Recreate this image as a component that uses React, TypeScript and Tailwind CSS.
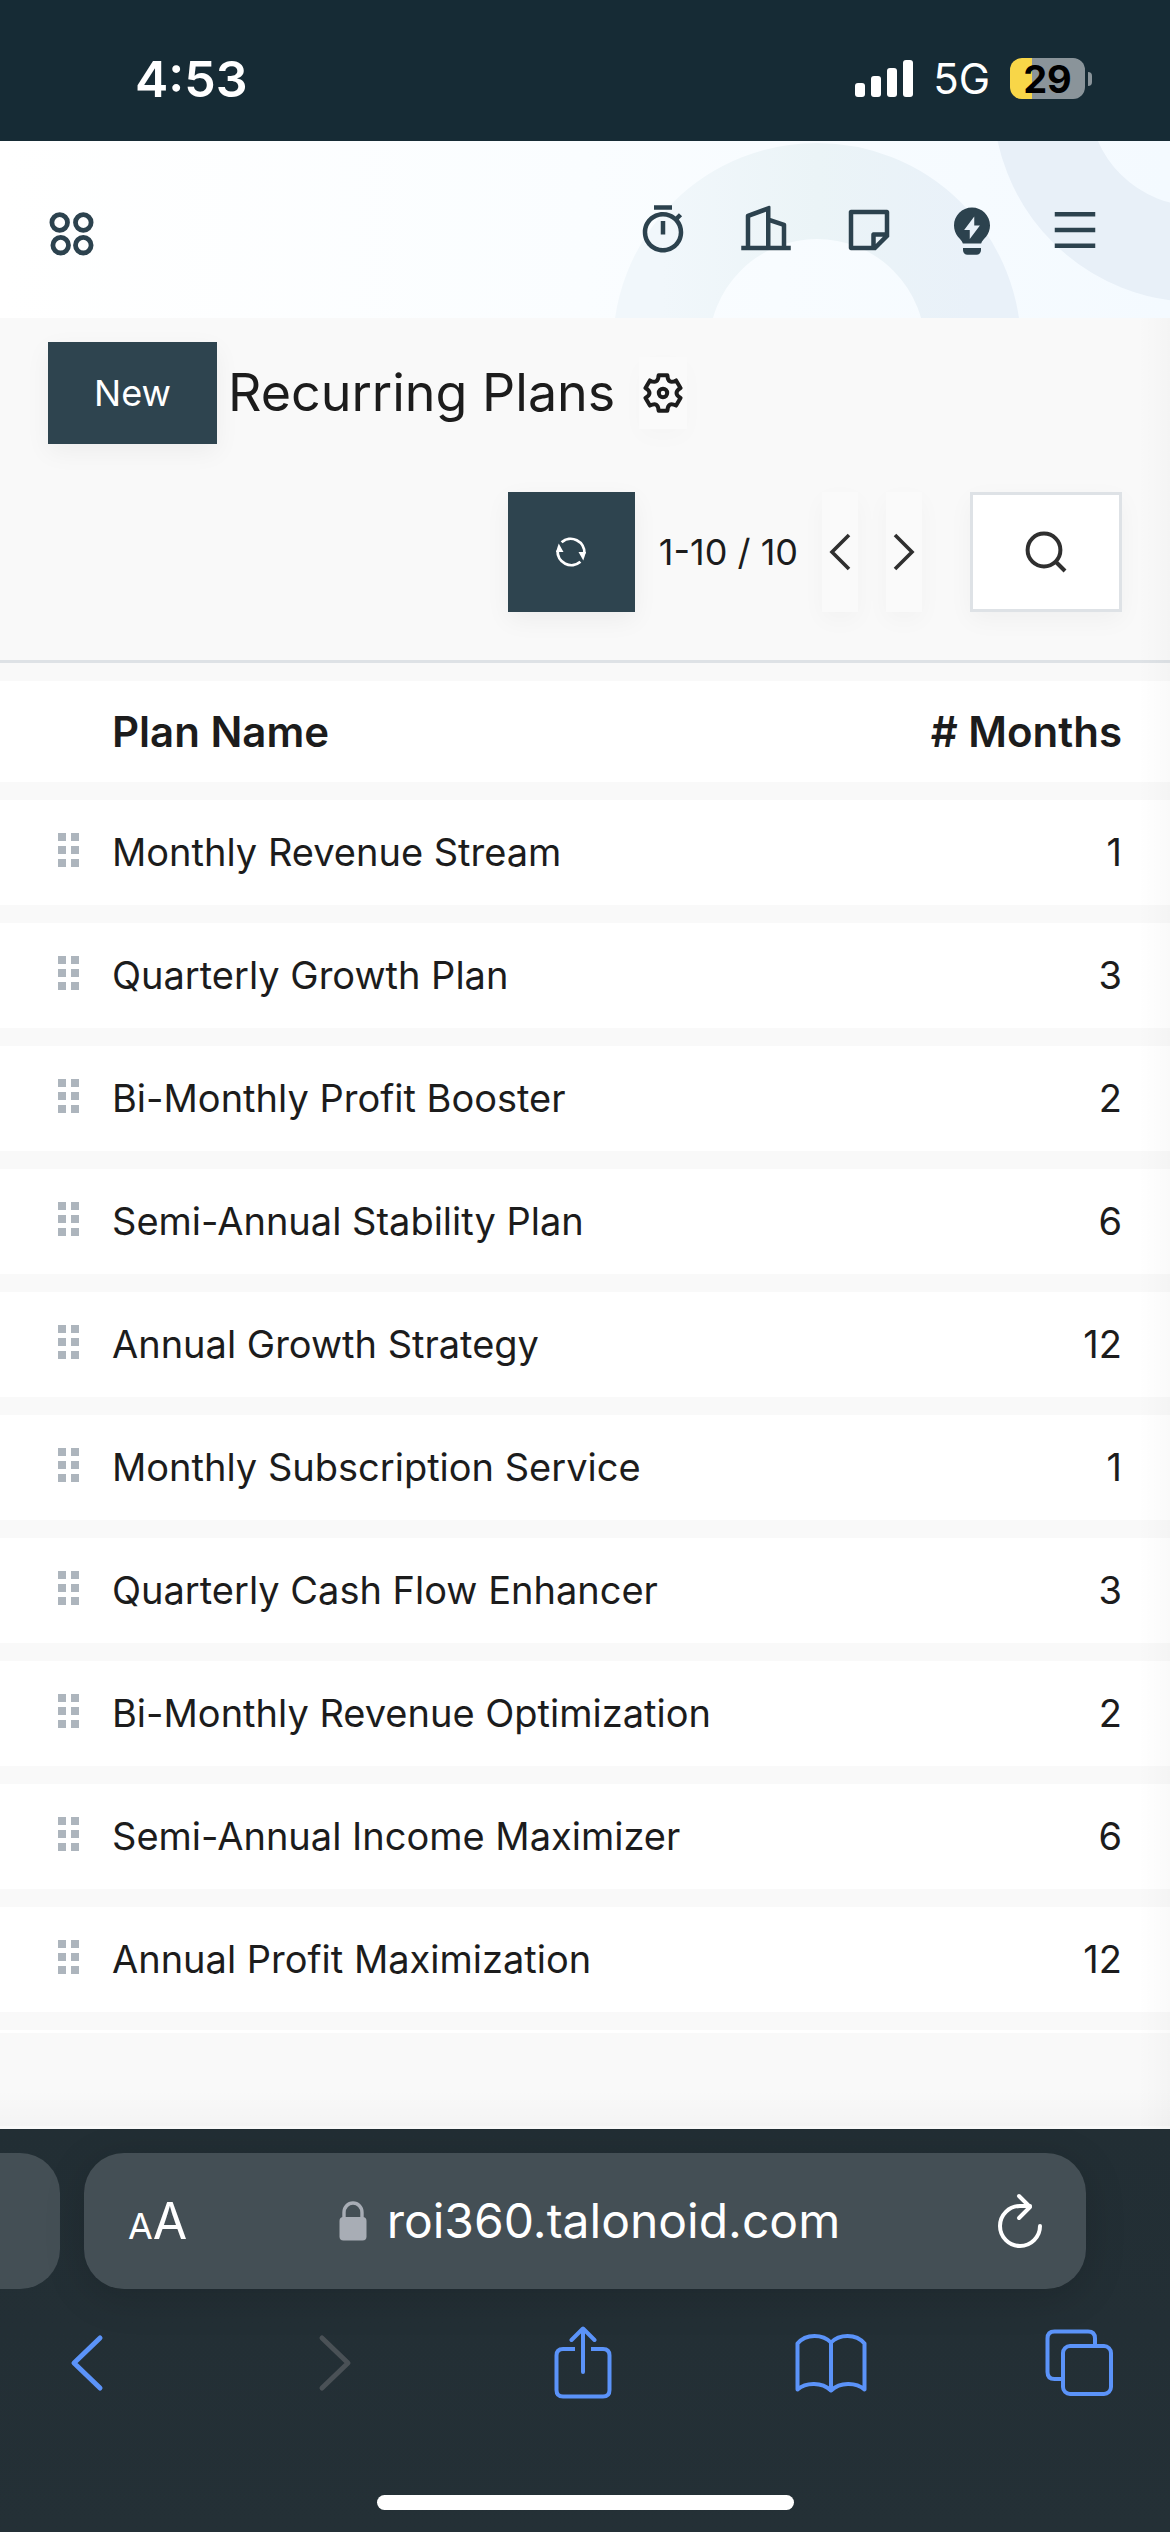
import type { ReactNode } from "react";
import {
  RiBuilding2Line,
  RiLightbulbFlashFill,
  RiMenuLine,
  RiStickyNoteLine,
  RiTimerLine,
} from "react-icons/ri";

type Plan = {
  name: string;
  months: number;
};

const plans: Plan[] = [
  { name: "Monthly Revenue Stream", months: 1 },
  { name: "Quarterly Growth Plan", months: 3 },
  { name: "Bi-Monthly Profit Booster", months: 2 },
  { name: "Semi-Annual Stability Plan", months: 6 },
  { name: "Annual Growth Strategy", months: 12 },
  { name: "Monthly Subscription Service", months: 1 },
  { name: "Quarterly Cash Flow Enhancer", months: 3 },
  { name: "Bi-Monthly Revenue Optimization", months: 2 },
  { name: "Semi-Annual Income Maximizer", months: 6 },
  { name: "Annual Profit Maximization", months: 12 },
];

const StatusBar = () => (
  <div className="flex h-[141px] items-center justify-between bg-[#162b35] pt-4 pr-[78px] pl-[135px] text-white">
    <span className="text-[50px] leading-none font-semibold">4:53</span>
    <div className="flex items-center gap-5">
      <svg width="58" height="38" viewBox="0 0 58 38" fill="currentColor" aria-hidden="true">
        <rect x="0" y="23" width="10" height="14" rx="3" />
        <rect x="16" y="16" width="10" height="21" rx="3" />
        <rect x="32" y="8" width="10" height="29" rx="3" />
        <rect x="48" y="0" width="10" height="37" rx="3" />
      </svg>
      <span className="text-[42px] leading-none">5G</span>
      <div className="flex items-center gap-[3px]">
        <div className="flex h-[41px] w-[75px] items-center justify-center rounded-xl bg-linear-to-r from-[#f8d648] from-29% to-[#8a949a] to-29% text-[38px] leading-none font-bold text-black">
          29
        </div>
        <div className="h-[14px] w-1 rounded-r-full bg-[#8a949a]" />
      </div>
    </div>
  </div>
);

const IconButton = ({ label, children }: { label: string; children: ReactNode }) => (
  <button aria-label={label} className="flex size-[54px] items-center justify-center">
    {children}
  </button>
);

const AppHeader = () => (
  <header className="relative flex h-[177px] items-center justify-between overflow-hidden bg-linear-to-r from-white via-[#fafdff] to-[#f4faff] pr-[68px] pl-11 text-[#2c424e]">
    <svg className="absolute top-0 right-0" width="570" height="177" viewBox="600 141 570 177" aria-hidden="true">
      <defs>
        <linearGradient id="ring" x1="0" y1="0" x2="1" y2="0">
          <stop offset="0" stopColor="#f1f7fb" />
          <stop offset="0.5" stopColor="#ebf4f7" />
          <stop offset="1" stopColor="#e9f1f9" />
        </linearGradient>
      </defs>
      <circle cx="817" cy="347" r="156" fill="none" stroke="url(#ring)" strokeWidth="96" />
      <circle cx="1197" cy="98" r="156" fill="none" stroke="#e8f0f8" strokeWidth="96" />
    </svg>
    <button aria-label="Home menu" className="relative">
      <svg width="54" height="54" viewBox="44 203 54 54" fill="none" stroke="currentColor" strokeWidth="4.8">
        <circle cx="59.7" cy="222.5" r="7.8" />
        <circle cx="83.3" cy="222.5" r="7.8" />
        <circle cx="60.7" cy="245.2" r="7.8" />
        <circle cx="83.3" cy="245.2" r="7.8" />
      </svg>
    </button>
    <nav className="relative flex items-center gap-[49px]">
      <IconButton label="Timer">
        <RiTimerLine size={54} />
      </IconButton>
      <IconButton label="Companies">
        <RiBuilding2Line size={54} />
      </IconButton>
      <IconButton label="Notes">
        <RiStickyNoteLine size={54} />
      </IconButton>
      <IconButton label="Tips">
        <RiLightbulbFlashFill size={54} />
      </IconButton>
      <IconButton label="Menu">
        <RiMenuLine size={54} />
      </IconButton>
    </nav>
  </header>
);

const GearIcon = () => (
  <svg width="40" height="40" viewBox="0 0 40 40" fill="none" stroke="currentColor" strokeWidth="4" strokeLinejoin="round">
    <path d="M15.6 2.3H24.4Q24.8 11.8 33.1 7.4L37.5 15Q29.5 20 37.5 25L33.1 32.6Q24.8 28.2 24.4 37.7H15.6Q15.2 28.2 6.9 32.6L2.5 25Q10.5 20 2.5 15L6.9 7.4Q15.2 11.8 15.6 2.3Z" />
    <circle cx="20" cy="20" r="4.2" />
  </svg>
);

const RefreshIcon = () => (
  <svg width="32" height="32" viewBox="0 0 32 32" fill="none" stroke="currentColor" strokeWidth="2.8">
    <path d="M6.6 6.2A13.8 13.8 0 0 1 29.4 17.5" />
    <path d="M25.4 25.8A13.8 13.8 0 0 1 2.6 14.5" />
    <path d="M23.5 16H31L28.3 24.5Z" fill="currentColor" stroke="none" />
    <path d="M8.5 16H1L3.7 7.5Z" fill="currentColor" stroke="none" />
  </svg>
);

const ControlPanel = () => (
  <section className="border-b-3 border-[#dee2e6] px-12 pt-6 pb-12">
    <div className="flex items-center">
      <button className="h-[102px] w-[169px] bg-[#2e444f] text-[36px] text-white shadow-[0_8px_24px_rgba(0,0,0,0.05)]">
        New
      </button>
      <h1 className="ml-[11px] text-[52px] leading-none">Recurring Plans</h1>
      <button
        aria-label="Settings"
        className="ml-6 flex h-[72px] w-12 items-center justify-center bg-[#fafafa] shadow-[0_8px_24px_rgba(0,0,0,0.02)]"
      >
        <GearIcon />
      </button>
    </div>
    <div className="mt-12 flex h-[120px] items-stretch justify-end">
      <button
        aria-label="Refresh"
        className="flex w-[127px] items-center justify-center bg-[#2e444f] text-white shadow-[0_8px_24px_rgba(0,0,0,0.05)]"
      >
        <RefreshIcon />
      </button>
      <span className="mx-6 self-center text-[36px]">1-10 / 10</span>
      <div className="flex gap-7 text-[#2f2f2f]">
        <button
          aria-label="Previous page"
          className="flex w-9 items-center justify-center bg-[#fafafa] shadow-[0_8px_24px_rgba(0,0,0,0.03)]"
        >
          <svg width="22" height="38" viewBox="0 0 22 38" fill="none" stroke="currentColor" strokeWidth="3.6">
            <path d="M20 2L3 19L20 36" />
          </svg>
        </button>
        <button
          aria-label="Next page"
          className="flex w-9 items-center justify-center bg-[#fafafa] shadow-[0_8px_24px_rgba(0,0,0,0.03)]"
        >
          <svg width="22" height="38" viewBox="0 0 22 38" fill="none" stroke="currentColor" strokeWidth="3.6">
            <path d="M2 2L19 19L2 36" />
          </svg>
        </button>
      </div>
      <button
        aria-label="Search"
        className="ml-12 flex w-[152px] items-center justify-center border-3 border-[#dee2e6] bg-white text-[#2f2f2f] shadow-[0_8px_24px_rgba(0,0,0,0.04)]"
      >
        <svg width="42" height="42" viewBox="0 0 42 42" fill="none" stroke="currentColor" strokeWidth="4">
          <circle cx="19" cy="19" r="16.4" />
          <path d="M30.5 30.5L40 40" />
        </svg>
      </button>
    </div>
  </section>
);

const DragHandle = () => (
  <svg className="mb-1" width="21" height="35" viewBox="0 0 21 35" fill="#adb5bd" aria-hidden="true">
    <rect x="0" y="0" width="8" height="8" />
    <rect x="13" y="0" width="8" height="8" />
    <rect x="0" y="13" width="8" height="8" />
    <rect x="13" y="13" width="8" height="8" />
    <rect x="0" y="26" width="8" height="8" />
    <rect x="13" y="26" width="8" height="8" />
  </svg>
);

const PlansTable = () => (
  <table className="w-full border-separate border-spacing-x-0 border-spacing-y-[18px] text-[38px]">
    <thead>
      <tr className="h-[101px] bg-white text-[42px]">
        <th className="w-28" />
        <th className="text-left font-semibold">Plan Name</th>
        <th className="pr-12 text-right font-semibold"># Months</th>
      </tr>
    </thead>
    <tbody>
      {plans.map((plan) => (
        <tr key={plan.name} className="h-[105px] bg-white">
          <td className="pl-[58px]">
            <DragHandle />
          </td>
          <td>{plan.name}</td>
          <td className="pr-12 text-right">{plan.months}</td>
        </tr>
      ))}
    </tbody>
  </table>
);

const ToolbarButton = ({ label, disabled, children }: { label: string; disabled?: boolean; children: ReactNode }) => (
  <button
    aria-label={label}
    disabled={disabled}
    className="flex h-[74px] w-[72px] items-center justify-center disabled:text-[#4a5156]"
  >
    {children}
  </button>
);

const BrowserBar = () => (
  <footer className="bg-linear-to-b from-[#222e34] to-[#243036] pt-6 text-white">
    <div className="flex h-[136px] gap-6">
      <div className="w-[60px] rounded-r-[40px] bg-[#444f55]" />
      <div className="mr-[84px] flex flex-1 items-center justify-between rounded-[40px] bg-[#444f55] px-11 shadow-[0_8px_40px_rgba(0,0,0,0.15)]">
        <button aria-label="Page settings" className="flex items-baseline leading-none">
          <span className="text-[36px]">A</span>
          <span className="text-[50px]">A</span>
        </button>
        <div className="flex items-center gap-5">
          <svg width="28" height="40" viewBox="0 0 28 40" aria-hidden="true">
            <rect x="0.5" y="16" width="27" height="23.5" rx="4" fill="#a8adb5" />
            <path d="M5 17V11.500A9 9.500 0 0 1 23 11.500V17" fill="none" stroke="#a8adb5" strokeWidth="3.4" />
          </svg>
          <input
            aria-label="Address"
            className="w-[460px] bg-transparent text-[48px] outline-none"
            defaultValue="roi360.talonoid.com"
          />
        </div>
        <button aria-label="Reload">
          <svg width="44" height="56" viewBox="0 0 44 56" fill="none" stroke="currentColor" strokeWidth="4" strokeLinecap="round" strokeLinejoin="round">
            <path d="M42 33A20 20 0 1 1 22 13H32" />
            <path d="M21 3L32 14L21 25" />
          </svg>
        </button>
      </div>
    </div>
    <nav className="flex h-[148px] items-center justify-between pr-[55px] pl-[51px] text-[#5b93f9]">
      <ToolbarButton label="Back">
        <svg width="36" height="58" viewBox="0 0 36 58" fill="none" stroke="currentColor" strokeWidth="5" strokeLinecap="round" strokeLinejoin="round">
          <path d="M31 4L5 29L31 54" />
        </svg>
      </ToolbarButton>
      <ToolbarButton label="Forward" disabled>
        <svg width="36" height="58" viewBox="0 0 36 58" fill="none" stroke="currentColor" strokeWidth="5" strokeLinecap="round" strokeLinejoin="round">
          <path d="M5 4L31 29L5 54" />
        </svg>
      </ToolbarButton>
      <ToolbarButton label="Share">
        <svg width="58" height="74" viewBox="0 0 58 74" fill="none" stroke="currentColor" strokeWidth="4" strokeLinecap="round" strokeLinejoin="round">
          <path d="M29 46V3M17.500 14L29 2.500L40.500 14" />
          <path d="M21 23H9Q2.500 23 2.500 29.500V64Q2.500 70.500 9 70.500H49Q55.500 70.500 55.500 64V29.500Q55.500 23 49 23H37" strokeLinecap="butt" />
        </svg>
      </ToolbarButton>
      <ToolbarButton label="Bookmarks">
        <svg width="72" height="60" viewBox="0 0 72 60" fill="none" stroke="currentColor" strokeWidth="4" strokeLinecap="round" strokeLinejoin="round">
          <path d="M36 9.500C28 1 11 0 2.500 10.500V56.500C11 49 27 49 36 57.500C45 49 61 49 69.500 56.500V10.500C61 0 44 1 36 9.500Z" />
          <path d="M36 10V57" />
        </svg>
      </ToolbarButton>
      <ToolbarButton label="Tabs">
        <svg width="68" height="68" viewBox="0 0 68 68" fill="none" stroke="currentColor" strokeWidth="4">
          <rect x="18" y="17" width="48" height="48" rx="7" />
          <path d="M50 17V9.500Q50 2.500 43 2.500H9.500Q2.500 2.500 2.500 9.500V43Q2.500 50 9.500 50H18" />
        </svg>
      </ToolbarButton>
    </nav>
    <div className="flex h-[95px] items-center justify-center pt-9">
      <div className="h-[15px] w-[417px] rounded-full bg-white" />
    </div>
  </footer>
);

export default function App() {
  return (
    <div className="flex min-h-screen flex-col bg-[#f9f9f9] font-['Inter',sans-serif] text-[#1c1c1c]">
      <StatusBar />
      <AppHeader />
      <main className="relative grow">
        <ControlPanel />
        <PlansTable />
        <div className="h-[3px] bg-white" />
        <div className="h-[93px] bg-linear-to-b from-transparent from-60% to-black/2" />
        <div className="pointer-events-none absolute inset-y-0 right-0 w-8 bg-linear-to-r from-transparent to-black/2" />
      </main>
      <BrowserBar />
    </div>
  );
}
